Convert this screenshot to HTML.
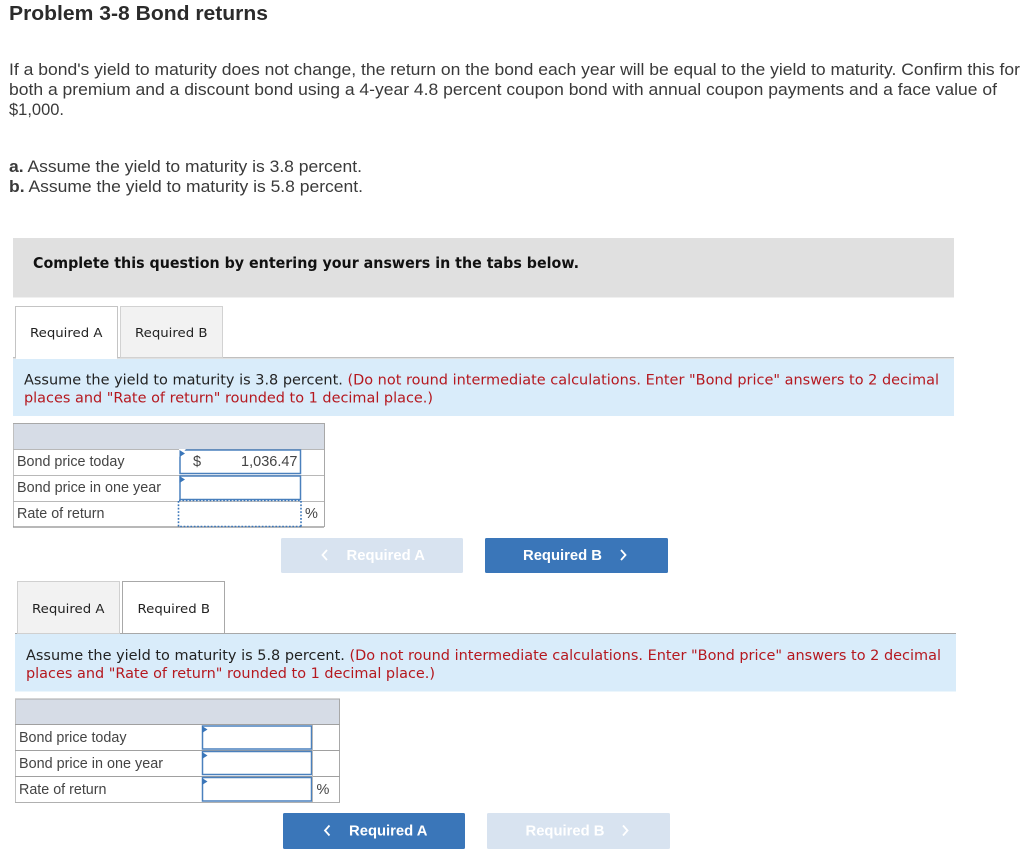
<!DOCTYPE html>
<html>
<head>
<meta charset="utf-8">
<style>
html,body{margin:0;padding:0;background:#fff;width:1024px;height:857px;overflow:hidden}
svg{display:block}
.p{font-family:"Liberation Sans",sans-serif;font-size:17px;fill:#3a3a3a}
.v{font-family:"DejaVu Sans",sans-serif;font-size:14px;fill:#222}
.r{fill:#b5181f}
.t{font-family:"DejaVu Sans",sans-serif;font-size:12.5px;fill:#222}
.c{font-family:"Liberation Sans",sans-serif;font-size:14.5px;fill:#444}
.b{font-family:"Liberation Sans",sans-serif;font-size:14.5px;font-weight:bold;fill:#fff}
</style>
</head>
<body>
<svg width="1024" height="857" viewBox="0 0 1024 857" xmlns="http://www.w3.org/2000/svg">
<rect width="1024" height="857" fill="#fff"/>

<text x="9" y="20" font-family="Liberation Sans,sans-serif" font-size="20.500" font-weight="bold" fill="#2b2b2b" textLength="259" lengthAdjust="spacingAndGlyphs">Problem 3-8 Bond returns</text>
<text class="p" x="9" y="75" textLength="1011" lengthAdjust="spacingAndGlyphs">If a bond's yield to maturity does not change, the return on the bond each year will be equal to the yield to maturity. Confirm this for</text>
<text class="p" x="9" y="95" textLength="988" lengthAdjust="spacingAndGlyphs">both a premium and a discount bond using a 4-year 4.8 percent coupon bond with annual coupon payments and a face value of</text>
<text class="p" x="9" y="115" textLength="55" lengthAdjust="spacingAndGlyphs">$1,000.</text>
<text class="p" x="9" y="172" textLength="353" lengthAdjust="spacingAndGlyphs"><tspan font-weight="bold">a.</tspan> Assume the yield to maturity is 3.8 percent.</text>
<text class="p" x="9" y="192" textLength="354" lengthAdjust="spacingAndGlyphs"><tspan font-weight="bold">b.</tspan> Assume the yield to maturity is 5.8 percent.</text>

<rect x="13" y="238" width="941" height="59.500" fill="#e0e0e0"/>
<text x="33" y="268" font-family="DejaVu Sans,sans-serif" font-size="15" font-weight="bold" fill="#111" textLength="546" lengthAdjust="spacingAndGlyphs">Complete this question by entering your answers in the tabs below.</text>

<!-- tabs 1 -->
<rect x="13" y="357" width="941" height="1.500" fill="#c0c0c0"/>
<rect x="120.500" y="306.500" width="102" height="51" fill="#f2f2f2" stroke="#d2d2d2"/>
<path d="M15.500 358V306.500H117.500V358" fill="#fff" stroke="#c4c4c4"/>
<rect x="16" y="357" width="101" height="2" fill="#fff"/>
<text class="t" x="30" y="337" textLength="72.500" lengthAdjust="spacingAndGlyphs">Required A</text>
<text class="t" x="135" y="337" textLength="72.500" lengthAdjust="spacingAndGlyphs">Required B</text>

<rect x="13" y="359" width="941" height="57" fill="#d9ecfa"/>
<text class="v" x="24" y="384.500" textLength="915" lengthAdjust="spacingAndGlyphs">Assume the yield to maturity is 3.8 percent. <tspan class="r">(Do not round intermediate calculations. Enter "Bond price" answers to 2 decimal</tspan></text>
<text class="v r" x="24" y="402.500" textLength="409" lengthAdjust="spacingAndGlyphs">places and "Rate of return" rounded to 1 decimal place.)</text>

<!-- table 1 -->
<rect x="13" y="424" width="311" height="25" fill="#d6dce6"/>
<path d="M13 423.500H324.500V527" fill="none" stroke="#a8a8a8"/>
<path d="M13.500 424V527" fill="none" stroke="#c0c0c0"/>
<path d="M13 449.500H324M13 475.500H324M13 501.500H324" stroke="#b8b8b8" fill="none"/>
<path d="M13 527H324" stroke="#8e8e8e" stroke-width="1.200" fill="none"/>
<text class="c" x="17" y="466" textLength="107.500" lengthAdjust="spacingAndGlyphs">Bond price today</text>
<text class="c" x="17" y="492" textLength="144" lengthAdjust="spacingAndGlyphs">Bond price in one year</text>
<text class="c" x="17" y="518" textLength="87.500" lengthAdjust="spacingAndGlyphs">Rate of return</text>

<rect x="180" y="450" width="120.500" height="23.500" fill="#fff" stroke="#4a80bd" stroke-width="1.500"/>
<path d="M179 449H186L179 457Z" fill="#fff"/>
<path d="M179.500 450L185 453.500L179.500 457Z" fill="#3a76b9"/>
<text class="c" x="193" y="466">$</text>
<text class="c" x="297.500" y="466" text-anchor="end">1,036.47</text>
<rect x="180" y="476" width="120.500" height="23.500" fill="#fff" stroke="#4a80bd" stroke-width="1.500"/>
<path d="M179.500 476L185 479.500L179.500 483Z" fill="#3a76b9"/>
<path d="M178.500 501V526.500H301M301 501V526.500M179 500.500H301" fill="none" stroke="#3a76b9" stroke-width="1.600" stroke-dasharray="1.700 1.700"/>
<text class="c" x="305" y="518">%</text>

<!-- buttons 1 -->
<rect x="281" y="538" width="182" height="35" rx="1.500" fill="#d8e3f0"/>
<path d="M327 550L322.500 555L327 560" fill="none" stroke="#fff" stroke-width="1.800"/>
<text class="b" x="346.500" y="560" textLength="78.500" lengthAdjust="spacingAndGlyphs">Required A</text>
<rect x="485" y="538" width="183" height="35" rx="1.500" fill="#3a76b9"/>
<text class="b" x="523" y="560" textLength="79" lengthAdjust="spacingAndGlyphs">Required B</text>
<path d="M621 550L625.500 555L621 560" fill="none" stroke="#fff" stroke-width="1.800"/>

<!-- tabs 2 -->
<rect x="15" y="633" width="941" height="1.200" fill="#a8a8a8"/>
<rect x="17.500" y="581.500" width="102" height="52" fill="#f2f2f2" stroke="#d0d0d0"/>
<path d="M122.500 633V581.500H224.500V633" fill="#fff" stroke="#a8a8a8"/>
<text class="t" x="32" y="613" textLength="72.500" lengthAdjust="spacingAndGlyphs">Required A</text>
<text class="t" x="137.500" y="613" textLength="72.500" lengthAdjust="spacingAndGlyphs">Required B</text>

<rect x="15" y="634" width="941" height="57.500" fill="#d9ecfa"/>
<text class="v" x="26" y="660" textLength="915" lengthAdjust="spacingAndGlyphs">Assume the yield to maturity is 5.8 percent. <tspan class="r">(Do not round intermediate calculations. Enter "Bond price" answers to 2 decimal</tspan></text>
<text class="v r" x="26" y="678" textLength="409" lengthAdjust="spacingAndGlyphs">places and "Rate of return" rounded to 1 decimal place.)</text>

<!-- table 2 -->
<rect x="15" y="699" width="324.500" height="25.500" fill="#d6dce6"/>
<path d="M15 699H339.500V802" fill="none" stroke="#a8a8a8"/>
<path d="M15.500 699V802" fill="none" stroke="#c0c0c0"/>
<path d="M15 724.500H340M15 750.500H340M15 776.500H340" stroke="#a0a0a0" fill="none"/>
<path d="M15 802.500H340" stroke="#b0b0b0" fill="none"/>
<text class="c" x="19" y="742" textLength="107.500" lengthAdjust="spacingAndGlyphs">Bond price today</text>
<text class="c" x="19" y="768" textLength="144" lengthAdjust="spacingAndGlyphs">Bond price in one year</text>
<text class="c" x="19" y="794" textLength="87.500" lengthAdjust="spacingAndGlyphs">Rate of return</text>

<rect x="202.500" y="726" width="109" height="23" fill="#fff" stroke="#4a80bd" stroke-width="1.500"/>
<path d="M202 726L207.500 729.500L202 733Z" fill="#3a76b9"/>
<rect x="202.500" y="751.500" width="109" height="23" fill="#fff" stroke="#4a80bd" stroke-width="1.500"/>
<path d="M202 752L207.500 755.500L202 759Z" fill="#3a76b9"/>
<rect x="202.500" y="777.500" width="109" height="23.500" fill="#fff" stroke="#4a80bd" stroke-width="1.500"/>
<path d="M202 778L207.500 781.500L202 785Z" fill="#3a76b9"/>
<path d="M312.500 725V802" stroke="#b8b8b8" fill="none"/>
<text class="c" x="316.500" y="794">%</text>

<!-- buttons 2 -->
<rect x="283" y="813" width="182" height="36" rx="1.500" fill="#3a76b9"/>
<path d="M329.500 825.500L325 830.500L329.500 835.500" fill="none" stroke="#fff" stroke-width="1.800"/>
<text class="b" x="349" y="835.500" textLength="78.500" lengthAdjust="spacingAndGlyphs">Required A</text>
<rect x="487" y="813" width="183" height="36" rx="1.500" fill="#d8e3f0"/>
<text class="b" x="525.500" y="835.500" textLength="79" lengthAdjust="spacingAndGlyphs">Required B</text>
<path d="M623 825.500L627.500 830.500L623 835.500" fill="none" stroke="#fff" stroke-width="1.800"/>
</svg>
</body>
</html>
